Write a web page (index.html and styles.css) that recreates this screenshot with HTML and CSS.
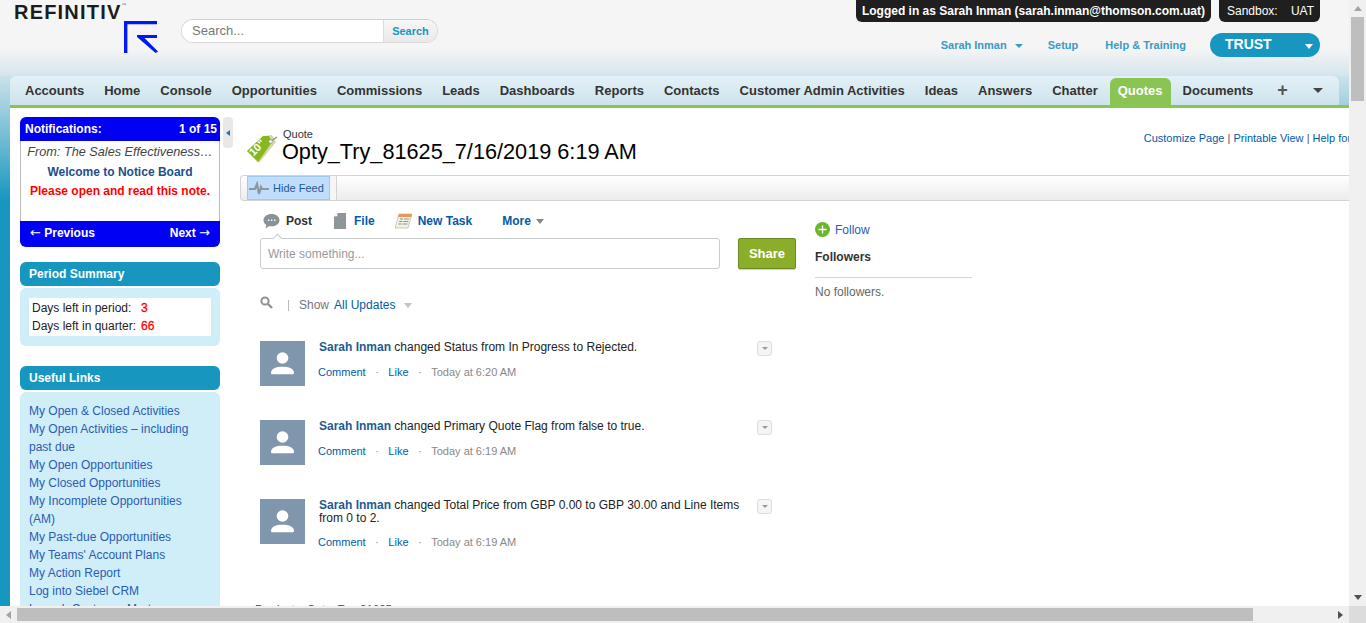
FILE: index.html
```html
<!DOCTYPE html>
<html>
<head>
  <meta charset="UTF-8">
  <title>Quote: Opty_Try_81625_7/16/2019 6:19 AM</title>
  <link rel="stylesheet" href="styles.css">
</head>
<body>
  <div class="window">
    <div class="page">
      <header class="top">
        <div class="brand">
          <div class="wordmark">REFINITIV<sup>™</sup></div>
          <svg class="brand-mark" width="36" height="33" viewBox="0 0 36 33">
            <path d="M1 33V1h33v3.200H4.400V33z" fill="#0018f9"/>
            <path d="M14 15h20v3H21.500L35 31.400 32.600 33 14 17z" fill="#0018f9"/>
          </svg>
        </div>
        <form class="search">
          <input class="search-input" placeholder="Search...">
          <button class="search-btn" type="button">Search</button>
        </form>
        <div class="top-right">
          <div class="badges">
            <div class="badge">Logged in as Sarah Inman (sarah.inman@thomson.com.uat)</div>
            <div class="badge badge-sandbox"><span>Sandbox:</span><span>UAT</span></div>
          </div>
          <div class="user-links">
            <a class="user-name">Sarah Inman <i class="caret caret-blue"></i></a>
            <a>Setup</a>
            <a>Help &amp; Training</a>
            <div class="trust"><span>TRUST</span><i class="caret caret-white"></i></div>
          </div>
        </div>
      </header>

      <nav class="tabs">
        <div class="tab-row">
          <a class="tab">Accounts</a>
          <a class="tab">Home</a>
          <a class="tab">Console</a>
          <a class="tab">Opportunities</a>
          <a class="tab">Commissions</a>
          <a class="tab">Leads</a>
          <a class="tab">Dashboards</a>
          <a class="tab">Reports</a>
          <a class="tab">Contacts</a>
          <a class="tab">Customer Admin Activities</a>
          <a class="tab">Ideas</a>
          <a class="tab">Answers</a>
          <a class="tab">Chatter</a>
          <a class="tab tab-active">Quotes</a>
          <a class="tab">Documents</a>
          <a class="tab tab-plus">+</a>
          <a class="tab tab-more"><i class="caret caret-dark"></i></a>
        </div>
      </nav>

      <div class="body">
        <aside class="sidebar">
          <section class="notice">
            <div class="notice-head"><span>Notifications:</span><span>1 of 15</span></div>
            <div class="notice-body">
              <div class="notice-from">From: The Sales Effectiveness…</div>
              <div class="notice-title">Welcome to Notice Board</div>
              <div class="notice-alert">Please open and read this note.</div>
            </div>
            <div class="notice-foot"><span><span class="notice-arrow">←</span> Previous</span><span>Next <span class="notice-arrow">→</span></span></div>
          </section>

          <section class="panel">
            <h3 class="panel-head">Period Summary</h3>
            <div class="panel-body">
              <div class="period">
                <div class="period-row"><span class="period-label">Days left in period:</span><b>3</b></div>
                <div class="period-row"><span class="period-label">Days left in quarter:</span><b>66</b></div>
              </div>
            </div>
          </section>

          <section class="panel panel-links">
            <h3 class="panel-head">Useful Links</h3>
            <div class="panel-body links">
              <a>My Open &amp; Closed Activities</a>
              <a>My Open Activities – including past due</a>
              <a>My Open Opportunities</a>
              <a>My Closed Opportunities</a>
              <a>My Incomplete Opportunities (AM)</a>
              <a>My Past-due Opportunities</a>
              <a>My Teams' Account Plans</a>
              <a>My Action Report</a>
              <a>Log into Siebel CRM</a>
              <a>Launch Customer Mart</a>
            </div>
          </section>
        </aside>

        <div class="collapse"><i></i></div>

        <main class="content">
          <div class="record-head">
            <svg class="record-icon" width="32" height="30" viewBox="0 0 32 30">
              <path d="M0 16 17 1l8-1 4 7-17 21z" fill="#d4d4ae"/>
              <path d="M0 16 16 1l6 0 3 6-14 20z" fill="#84b81e"/>
              <path d="M24 6l6-4" stroke="#8a8a8a" stroke-width="1.200" fill="none"/>
              <circle cx="23.500" cy="6.500" r="1.800" fill="#fff" stroke="#8a8a8a" stroke-width=".6"/>
              <text x="6.500" y="21.500" class="tag-text" transform="rotate(-45 6.500 21.500)">10"</text>
            </svg>
            <div class="record-names">
              <div class="record-type">Quote</div>
              <h1 class="record-title">Opty_Try_81625_7/16/2019 6:19 AM</h1>
            </div>
            <div class="record-links">
              <a>Customize Page</a> | <a>Printable View</a> | <a>Help for this Page</a>
            </div>
          </div>

          <div class="feed-bar">
            <button class="hide-feed" type="button">
              <svg width="20" height="14" viewBox="0 0 20 14"><path d="M0 8h6l2-5 2 10 2-7 1 2h7" fill="none" stroke="#8f979c" stroke-width="2.200"/></svg>
              Hide Feed
            </button>
          </div>

          <div class="feed-area">
            <div class="feed-main">
              <div class="publisher-tabs">
                <a class="pub-tab pub-post">
                  <svg width="17" height="16" viewBox="0 0 17 16"><path d="M8.500 1C13 1 16.500 3.700 16.500 7.200S13 13.300 8.500 13.300c-.8 0-1.500-.1-2.200-.2L2.500 15.500l.8-3.600C1.500 10.800.5 9.100.5 7.200.5 3.700 4 1 8.500 1z" fill="#8b9297"/><path d="M5 7.300h1.400M8 7.300h1.400M11 7.300h1.400" stroke="#fff" stroke-width="1.400"/></svg>
                  Post
                </a>
                <a class="pub-tab pub-file">
                  <svg width="12" height="16" viewBox="0 0 12 16"><path d="M4 0h8v16H0V4z" fill="#8f9699"/><path d="M3.300.6v2.700H.6z" fill="#fff"/></svg>
                  File
                </a>
                <a class="pub-tab pub-task">
                  <svg width="17" height="16" viewBox="0 0 17 16"><path d="M4 1h13l-4 14H0z" fill="#f1f1ea" stroke="#a9a9a0" stroke-width=".6"/><path d="M4 1h13l-1 3H3z" fill="#e69a5a"/><path d="M5 6h3M4.300 8.500h3M3.500 11h3" stroke="#6aa84f" stroke-width="1.200"/><path d="M9 6h5M8.300 8.500h5M7.500 11h5" stroke="#777" stroke-width=".8"/></svg>
                  New Task
                </a>
                <a class="pub-tab pub-more">More <i class="caret caret-gray"></i></a>
              </div>
              <div class="composer">
                <div class="composer-box">
                  <input class="composer-input" placeholder="Write something...">
                </div>
                <button class="share" type="button">Share</button>
              </div>
              <div class="filter">
                <svg width="13" height="13" viewBox="0 0 13 13"><circle cx="5" cy="5" r="3.600" fill="none" stroke="#8c9296" stroke-width="2"/><path d="M8 8l4 4" stroke="#8c9296" stroke-width="2.400"/></svg>
                <span class="filter-sep"></span>
                <span class="filter-show">Show</span>
                <a>All Updates</a>
                <i class="caret caret-pale"></i>
              </div>

              <article class="post">
                <svg class="avatar" width="45" height="45" viewBox="0 0 45 45"><rect width="45" height="45" fill="#8096ac"/><circle cx="22.500" cy="17" r="5.800" fill="#fff"/><path d="M11 32c0-4.500 5-6.300 11.500-6.300S34 27.500 34 32c0 .8-.6 1.300-1.300 1.300H12.300C11.600 33.300 11 32.800 11 32z" fill="#fff"/></svg>
                <div class="post-body">
                  <p class="post-text"><a class="author">Sarah Inman</a> changed Status from In Progress to Rejected.</p>
                  <div class="post-meta"><a>Comment</a><span>·</span><a>Like</a><span>·</span><time>Today at 6:20 AM</time></div>
                </div>
                <button class="post-menu" type="button"><i class="caret caret-tiny"></i></button>
              </article>

              <article class="post">
                <svg class="avatar" width="45" height="45" viewBox="0 0 45 45"><rect width="45" height="45" fill="#8096ac"/><circle cx="22.500" cy="17" r="5.800" fill="#fff"/><path d="M11 32c0-4.500 5-6.300 11.500-6.300S34 27.500 34 32c0 .8-.6 1.300-1.300 1.300H12.300C11.600 33.300 11 32.800 11 32z" fill="#fff"/></svg>
                <div class="post-body">
                  <p class="post-text"><a class="author">Sarah Inman</a> changed Primary Quote Flag from false to true.</p>
                  <div class="post-meta"><a>Comment</a><span>·</span><a>Like</a><span>·</span><time>Today at 6:19 AM</time></div>
                </div>
                <button class="post-menu" type="button"><i class="caret caret-tiny"></i></button>
              </article>

              <article class="post post-long">
                <svg class="avatar" width="45" height="45" viewBox="0 0 45 45"><rect width="45" height="45" fill="#8096ac"/><circle cx="22.500" cy="17" r="5.800" fill="#fff"/><path d="M11 32c0-4.500 5-6.300 11.500-6.300S34 27.500 34 32c0 .8-.6 1.300-1.300 1.300H12.300C11.600 33.300 11 32.800 11 32z" fill="#fff"/></svg>
                <div class="post-body">
                  <p class="post-text"><a class="author">Sarah Inman</a> changed Total Price from GBP 0.00 to GBP 30.00 and Line Items from 0 to 2.</p>
                  <div class="post-meta"><a>Comment</a><span>·</span><a>Like</a><span>·</span><time>Today at 6:19 AM</time></div>
                </div>
                <button class="post-menu" type="button"><i class="caret caret-tiny"></i></button>
              </article>

              <div class="related">Products: Opty_Try_81625</div>
            </div>

            <div class="feed-side">
              <a class="follow">
                <svg width="15" height="15" viewBox="0 0 15 15"><circle cx="7.500" cy="7.500" r="7.500" fill="#6db52d"/><path d="M7.500 3.500v8M3.500 7.500h8" stroke="#fff" stroke-width="1.300"/></svg>
                Follow
              </a>
              <div class="followers-title">Followers</div>
              <div class="followers-none">No followers.</div>
            </div>
          </div>
        </main>
      </div>
    </div>

    <div class="vscroll">
      <i class="arrow arrow-up"></i>
      <div class="vthumb"></div>
      <i class="arrow arrow-down"></i>
    </div>
    <div class="hscroll">
      <i class="arrow arrow-left"></i>
      <div class="hthumb"></div>
      <i class="arrow arrow-right"></i>
    </div>
    <div class="corner"></div>
  </div>
</body>
</html>
```

FILE: styles.css
```css
* {
  box-sizing: border-box;
}
html,
body {
  margin: 0;
  height: 100%;
  overflow: hidden;
}
body {
  font-family: "Liberation Sans", Arial, sans-serif;
  font-size: 12px;
  color: #222;
}
a {
  color: #015ba7;
  text-decoration: none;
}
button,
input {
  font-family: inherit;
}

.window {
  display: grid;
  grid-template-columns: 1349px 17px;
  grid-template-rows: 606px 17px;
  height: 623px;
}
.page {
  overflow: hidden;
  padding-left: 10px;
  background: linear-gradient(#f5f5f5 0, #f5f5f5 45px, #a9d3e2 100px, #1797c0 200px, #1797c0 100%);
  display: flex;
  flex-direction: column;
}

/* header */
.top {
  height: 76px;
  flex: none;
  margin-left: -10px;
  display: flex;
  background: linear-gradient(#f5f5f5 0, #f5f5f5 48px, #d5e5ec 76px);
}
.brand {
  width: 181px;
  flex: none;
  padding: 1px 0 0 14px;
  display: flex;
  flex-direction: column;
}
.wordmark {
  font-size: 20px;
  line-height: 22px;
  font-weight: bold;
  letter-spacing: 1.200px;
  color: #1c1c1c;
  white-space: nowrap;
}
.wordmark sup {
  font-size: 5px;
  letter-spacing: 0;
  vertical-align: 12px;
  line-height: 0;
  color: #777;
}
.brand-mark {
  margin: -3px 0 0 109px;
}
.search {
  margin-top: 19px;
  width: 257px;
  height: 24px;
  display: flex;
  border: 1px solid #d8d8d8;
  border-top-color: #cfcfcf;
  border-radius: 12px;
  background: #fff;
  overflow: hidden;
}
.search-input {
  flex: 1;
  min-width: 0;
  border: 0;
  outline: 0;
  padding: 0 10px 2px;
  font-size: 13px;
  color: #666;
}
.search-input::placeholder {
  color: #777;
  opacity: 1;
}
.search-btn {
  width: 54px;
  border: 0;
  border-left: 1px solid #ddd;
  background: linear-gradient(#f7f7f7, #e9e9e9);
  color: #1797c0;
  font-size: 11px;
  font-weight: bold;
  padding: 0;
}
.top-right {
  margin-left: auto;
  margin-right: 29px;
  display: flex;
  flex-direction: column;
  align-items: flex-end;
}
.badges {
  display: flex;
  gap: 8px;
}
.badge {
  height: 22px;
  padding: 0 6px;
  background: #1f1f1f;
  color: #fff;
  font-size: 12px;
  font-weight: bold;
  line-height: 22px;
  border-radius: 0 0 6px 6px;
  white-space: nowrap;
}
.badge-sandbox {
  width: 101px;
  display: flex;
  justify-content: space-between;
  font-weight: normal;
  padding: 0 6px 0 8px;
}
.user-links {
  margin-top: 11px;
  display: flex;
  align-items: center;
  font-size: 11px;
  font-weight: bold;
}
.user-links a {
  color: #3a9ac4;
  white-space: nowrap;
  margin-right: 27px;
}
.user-links .user-name {
  margin-right: 25px;
}
.trust {
  width: 110px;
  height: 24px;
  margin-left: -3px;
  padding: 0 7px 0 15px;
  border-radius: 12px;
  background: #1797c0;
  color: #fff;
  display: flex;
  align-items: center;
  justify-content: space-between;
  font-size: 14px;
}
.trust span {
  padding-bottom: 2px;
}

/* carets */
.caret {
  display: inline-block;
  width: 0;
  height: 0;
  border-style: solid;
  border-color: transparent;
  border-bottom-width: 0;
}
.caret-blue {
  margin-left: 5px;
  border-width: 4px 4px 0;
  border-top-color: #3a9ac4;
  vertical-align: 1px;
}
.caret-white {
  border-width: 5px 4.500px 0;
  border-top-color: #fff;
  margin-top: 2px;
}
.caret-dark {
  border-width: 5px 5.500px 0;
  border-top-color: #444;
}
.caret-gray {
  margin-left: 5px;
  border-width: 5px 4px 0;
  border-top-color: #888;
  vertical-align: 1px;
}
.caret-pale {
  margin-left: 9px;
  border-width: 5px 4.500px 0;
  border-top-color: #c2c2c2;
}
.caret-tiny {
  border-width: 3.500px 3.500px 0;
  border-top-color: #999;
}

/* tabs */
.tabs {
  height: 32px;
  flex: none;
  border-bottom: 3px solid #8ac553;
}
.tab-row {
  width: 1329px;
  height: 29px;
  padding: 2px 0 0 5px;
  display: flex;
  border-radius: 6px 6px 0 0;
  background: linear-gradient(#e4f1f7, #cde3ec);
}
.tab {
  padding: 0 8px;
  margin: 0 2px;
  height: 27px;
  line-height: 25px;
  color: #333;
  font-size: 13px;
  font-weight: bold;
  white-space: nowrap;
}
.tab-active {
  background: #8ac553;
  color: #fff;
  border-radius: 6px 6px 0 0;
}
.tab-plus {
  margin-left: 8px;
  font-size: 18px;
  padding: 0 6px;
  color: #555;
}
.tab-more {
  margin-left: 10px;
  padding: 10px 7px 0;
  line-height: 0;
}

/* layout under the tabs */
.body {
  flex: 1;
  min-height: 0;
  display: flex;
  background: #fff;
  overflow: hidden;
}
.sidebar {
  width: 210px;
  flex: none;
  padding: 9px 0 0 10px;
  overflow: hidden;
}

/* notifications */
.notice {
  width: 200px;
  border-radius: 6px;
  overflow: hidden;
}
.notice-head,
.notice-foot {
  display: flex;
  justify-content: space-between;
  background: #0000f5;
  color: #fff;
  font-weight: bold;
}
.notice-head {
  height: 24px;
  line-height: 24px;
  padding: 0 3px 0 5px;
}
.notice-foot {
  height: 26px;
  line-height: 24px;
  padding: 0 10px;
}
.notice-arrow {
  font-family: "DejaVu Sans", sans-serif;
  font-weight: normal;
  font-size: 13px;
}
.notice-body {
  height: 80px;
  padding-top: 2px;
  border: solid #bbb;
  border-width: 0 1px;
  text-align: center;
  line-height: 19.500px;
  white-space: nowrap;
}
.notice-from {
  font-size: 12.700px;
  font-style: italic;
  color: #444;
}
.notice-title {
  color: #1c4f8c;
  font-weight: bold;
}
.notice-alert {
  color: #f00;
  font-weight: bold;
}

/* side panels */
.panel {
  width: 200px;
  margin-top: 15px;
}
.panel-links {
  margin-top: 20px;
}
.panel-head {
  margin: 0;
  height: 24px;
  padding-left: 9px;
  line-height: 24px;
  font-size: 12px;
  color: #fff;
  background: #1797c0;
  border-radius: 6px;
}
.panel-body {
  margin-top: 2px;
  padding: 10px 9px;
  background: #cfeef8;
  border-radius: 6px;
}
.period {
  background: #fff;
  padding: 1px 3px;
}
.period-row {
  height: 18px;
  line-height: 18px;
  display: flex;
}
.period-label {
  width: 109px;
}
.period-row b {
  color: #f00;
  font-weight: normal;
  -webkit-text-stroke: .3px #f00;
}
.links {
  padding-top: 10px;
}
.links a {
  display: block;
  line-height: 18px;
  color: #2d5bb5;
}

.collapse {
  width: 10px;
  height: 31px;
  flex: none;
  margin: 9px 7px 0 3px;
  border-radius: 4px;
  background: #e8e8e8;
  display: flex;
  align-items: center;
  justify-content: center;
}
.collapse i {
  width: 0;
  height: 0;
  border: solid transparent;
  border-width: 3px 4px 3px 0;
  border-right-color: #2a6fb5;
}

/* main */
.content {
  flex: 1;
  min-width: 0;
  overflow: hidden;
}
.record-head {
  height: 67px;
  padding: 20px 0 0 7px;
  display: flex;
  white-space: nowrap;
}
.record-icon {
  flex: none;
  margin-top: 7px;
}
.tag-text {
  font-size: 11px;
  font-weight: bold;
  fill: #fff;
}
.record-names {
  margin-left: 3px;
}
.record-type {
  padding-left: 1px;
  font-size: 11px;
  line-height: 13px;
  color: #333;
}
.record-title {
  margin: 0;
  font-size: 21.700px;
  line-height: 22px;
  font-weight: normal;
  color: #000;
}
.record-links {
  margin-left: auto;
  margin-right: -51px;
  padding-top: 4px;
  font-size: 11px;
  line-height: 13px;
  color: #555;
}
.feed-bar {
  height: 26px;
  padding-left: 6px;
  border: 1px solid #d4d4d4;
  border-right: 0;
  border-radius: 4px 0 0 4px;
  background: linear-gradient(#fff, #ececec);
}
.hide-feed {
  width: 83px;
  height: 24px;
  display: flex;
  align-items: center;
  gap: 4px;
  padding: 0 0 0 1px;
  background: #c0defc;
  border: 1px solid #9cc9f5;
  box-shadow: 6px 0 0 #f5f5f5, 7px 0 0 #d4d4d4;
  color: #1c5a96;
  font-size: 11px;
  white-space: nowrap;
}
.feed-area {
  display: flex;
}
.feed-main {
  width: 575px;
  flex: none;
  padding-left: 20px;
}
.publisher-tabs {
  display: flex;
  align-items: center;
  height: 37px;
  padding-top: 3px;
  font-size: 12px;
  font-weight: bold;
}
.pub-tab {
  display: flex;
  align-items: center;
  gap: 6px;
  white-space: nowrap;
}
.pub-post {
  margin-left: 3px;
  color: #333;
}
.pub-file {
  margin-left: 22px;
  gap: 8px;
}
.pub-task {
  margin-left: 20px;
}
.pub-more {
  margin-left: 30px;
  gap: 0;
}
.composer {
  display: flex;
  gap: 18px;
}
.composer-box {
  position: relative;
  width: 460px;
  height: 31px;
}
.composer-box::before {
  content: "";
  position: absolute;
  top: -3px;
  left: 14px;
  width: 6px;
  height: 6px;
  background: #fff;
  border: solid #c7ccce;
  border-width: 1px 0 0 1px;
  transform: rotate(45deg);
}
.composer-input {
  width: 100%;
  height: 100%;
  padding: 0 7px;
  border: 1px solid #c7ccce;
  border-radius: 3px;
  font-size: 12px;
  outline: 0;
}
.composer-input::placeholder {
  color: #999;
  opacity: 1;
}
.share {
  width: 58px;
  height: 31px;
  border: 1px solid #6c8a25;
  border-radius: 2px;
  background: #8aae2a;
  box-shadow: 0 1px 1px rgba(0, 0, 0, .2);
  color: #fff;
  font-size: 13px;
  font-weight: bold;
  padding: 0;
}
.filter {
  margin-top: 27px;
  height: 18px;
  display: flex;
  align-items: center;
  white-space: nowrap;
}
.filter svg {
  margin: -6px 0 0;
}
.filter-sep {
  width: 1px;
  height: 11px;
  margin: 0 10px 0 15px;
  background: #bbb;
}
.filter-show {
  color: #777;
  margin-right: 5px;
}
.post {
  position: relative;
  display: flex;
  height: 79px;
}
.filter + .post {
  margin-top: 27px;
}
.post-long {
  height: 103px;
}
.avatar {
  flex: none;
}
.post-body {
  width: 425px;
  margin-left: 14px;
}
.post-text {
  margin: 0;
  line-height: 13px;
  color: #222;
}
.author {
  font-weight: bold;
  color: #1c5a96;
}
.post-meta {
  margin: 12px 0 0 -1px;
  display: flex;
  gap: 9.500px;
  line-height: 13px;
  font-size: 11px;
}
.post-long .post-meta {
  margin-top: 11px;
}
.post-meta span,
.post-meta time {
  color: #888;
}
.post-menu {
  position: absolute;
  top: 0;
  left: 497px;
  width: 15px;
  height: 15px;
  padding: 0;
  display: flex;
  align-items: center;
  justify-content: center;
  border: 1px solid #ddd;
  border-radius: 3px;
  background: #f5f5f5;
}
.related {
  margin-left: -5px;
  line-height: 14px;
  color: #015ba7;
  font-size: 11.500px;
}
.feed-side {
  width: 157px;
  flex: none;
  padding-top: 21px;
}
.follow {
  display: flex;
  align-items: center;
  gap: 5px;
  color: #2a5db0;
}
.followers-title {
  margin-top: 13px;
  padding-bottom: 13px;
  border-bottom: 1px solid #d4d4d4;
  font-weight: bold;
  color: #333;
  line-height: 14px;
}
.followers-none {
  margin-top: 7px;
  color: #666;
  line-height: 14px;
}

/* scrollbars, drawn because the page is clipped */
.vscroll,
.hscroll {
  background: #f0f0f0;
  display: flex;
  align-items: center;
}
.vscroll {
  flex-direction: column;
  padding: 6px 0;
}
.vthumb {
  width: 13px;
  height: 84px;
  margin: 6px 0 auto;
  background: #bebebe;
}
.hscroll {
  padding: 0 6px;
}
.hthumb {
  height: 13px;
  width: 1236px;
  margin: 0 auto 0 6px;
  background: #bebebe;
}
.corner {
  background: #dcdcdc;
}
.arrow {
  width: 0;
  height: 0;
  flex: none;
  border: solid transparent;
}
.arrow-up {
  border-width: 0 4px 5px;
  border-bottom-color: #a3a3a3;
}
.arrow-down {
  border-width: 5px 4px 0;
  border-top-color: #505050;
}
.arrow-left {
  border-width: 4px 5px 4px 0;
  border-right-color: #a3a3a3;
}
.arrow-right {
  border-width: 4px 0 4px 5px;
  border-left-color: #505050;
}
```
